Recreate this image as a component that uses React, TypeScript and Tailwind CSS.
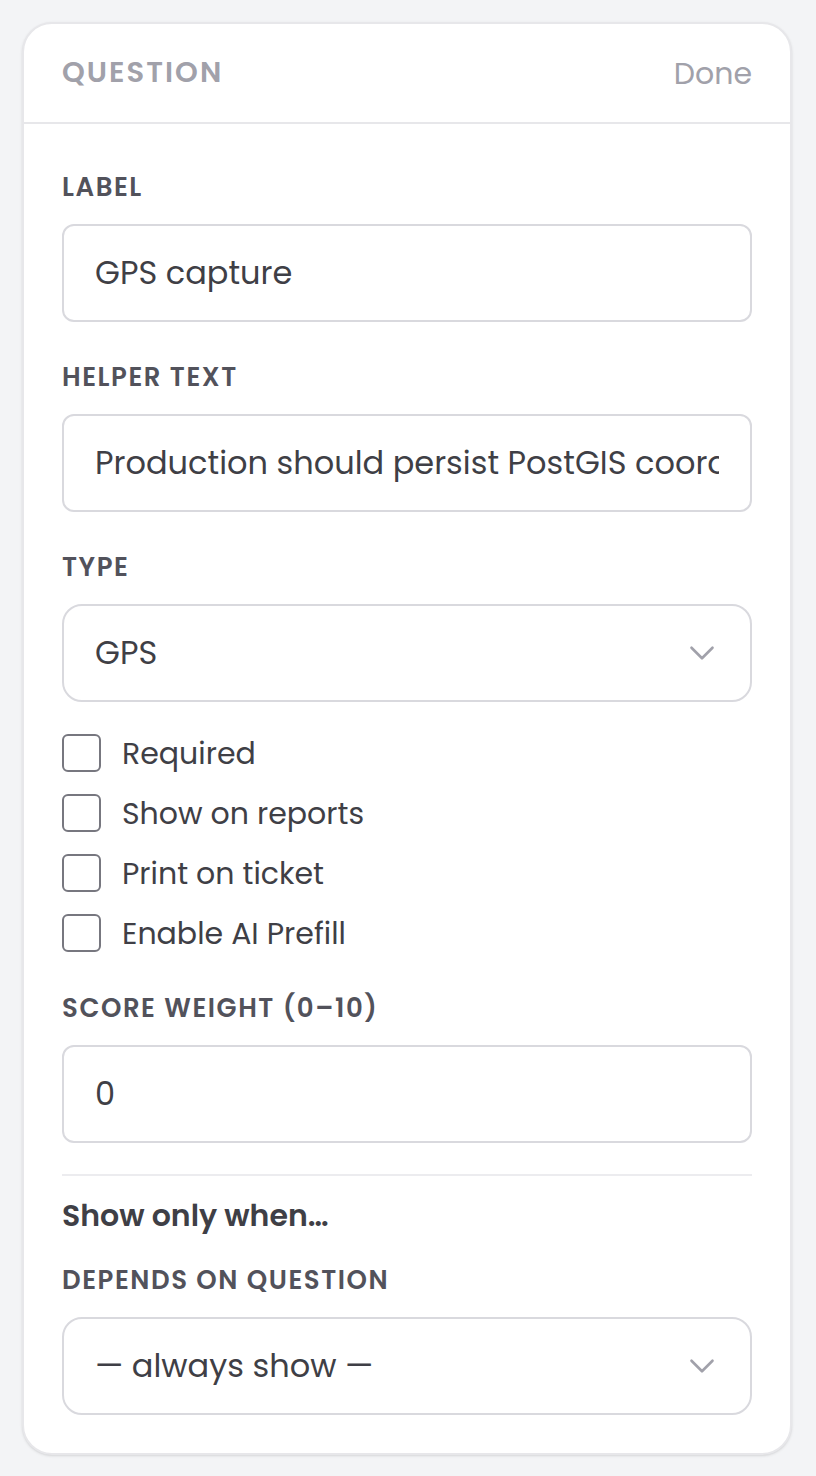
import { ChevronDown } from "lucide-react";

const font = { fontFamily: "Poppins, Inter, 'Noto Sans', sans-serif" };

const checks = ["Required", "Show on reports", "Print on ticket", "Enable AI Prefill"];

const FieldLabel = ({ children }: { children: React.ReactNode }) => (
  <div className="text-[26px] leading-[32px] font-semibold tracking-[0.06em] text-[#52525b] mb-[21px]">
    {children}
  </div>
);

const TextBox = ({ value }: { value: string }) => (
  <div className="h-[98px] rounded-[12px] border-2 border-[#d9d9de] bg-white flex items-center pl-[31px] pr-[31px] overflow-hidden">
    <span className="whitespace-nowrap overflow-hidden text-[32px] text-[#3f3f46]">{value}</span>
  </div>
);

const SelectBox = ({ value }: { value: string }) => (
  <div className="h-[98px] rounded-[20px] border-2 border-[#d9d9de] bg-white flex items-center justify-between pl-[31px] pr-[27px]">
    <span className="text-[32px] text-[#3f3f46]">{value}</span>
    <ChevronDown className="w-[42px] h-[42px] text-[#a1a1aa]" strokeWidth={1.5} />
  </div>
);

export default function App() {
  return (
    <div className="min-h-[1476px] bg-[#f3f4f6] p-[22px] pr-[24px]" style={font}>
      <div className="w-[770px] bg-white rounded-[30px] border-2 border-[#e7e7ea] shadow-sm overflow-hidden">
        <div className="h-[100px] flex items-center justify-between px-[38px] border-b-2 border-[#e7e7ea]">
          <span className="text-[29px] font-semibold tracking-[0.07em] text-[#a1a1aa]">QUESTION</span>
          <span className="text-[30px] text-[#a1a1aa]">Done</span>
        </div>

        <div className="px-[38px] pt-[47px] pb-[38px]">
          <div>
            <FieldLabel>LABEL</FieldLabel>
            <TextBox value="GPS capture" />
          </div>

          <div className="mt-[39px]">
            <FieldLabel>HELPER TEXT</FieldLabel>
            <TextBox value="Production should persist PostGIS coordinates with accuracy" />
          </div>

          <div className="mt-[39px]">
            <FieldLabel>TYPE</FieldLabel>
            <SelectBox value="GPS" />
          </div>

          <div className="mt-[32px] flex flex-col gap-[22px]">
            {checks.map((c) => (
              <label key={c} className="flex items-center gap-[21px] h-[38px]">
                <span className="w-[39px] h-[38px] rounded-[6px] border-2 border-[#77777f] bg-white" />
                <span className="text-[30px] text-[#3f3f46]">{c}</span>
              </label>
            ))}
          </div>

          <div className="mt-[40px]">
            <FieldLabel>SCORE WEIGHT (0–10)</FieldLabel>
            <TextBox value="0" />
          </div>

          <div className="mt-[31px] border-t-2 border-[#ececef]" />

          <div className="mt-[22px] text-[30px] leading-[36px] font-semibold text-[#3f3f46]">Show only when…</div>

          <div className="mt-[30px]">
            <FieldLabel>DEPENDS ON QUESTION</FieldLabel>
            <SelectBox value="— always show —" />
          </div>
        </div>
      </div>
    </div>
  );
}
